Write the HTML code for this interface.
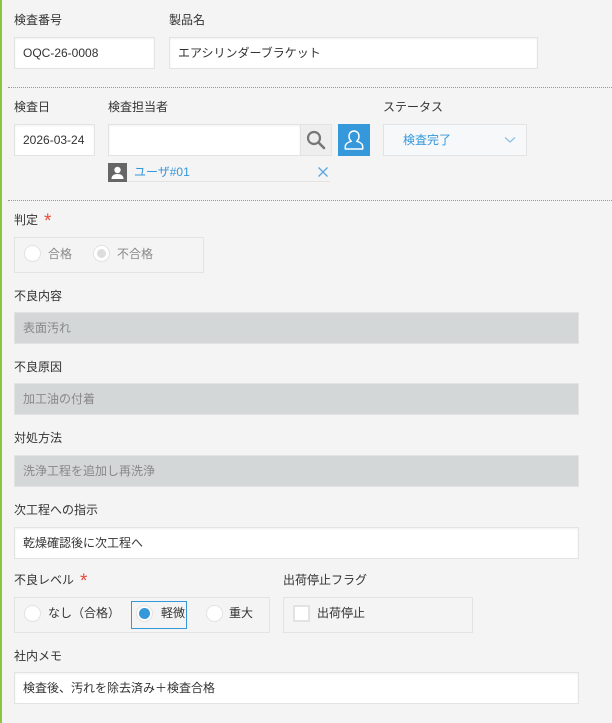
<!DOCTYPE html>
<html><head><meta charset="utf-8"><style>
*{box-sizing:border-box;margin:0;padding:0}
body{width:612px;height:723px;background:#f4f4f4;position:relative;overflow:hidden;font-family:"Liberation Sans","Noto Sans CJK JP",sans-serif;font-size:12px;color:#333}
.a{position:absolute}
.lbl{position:absolute;font-size:12px;line-height:14px;color:#333}
.in{position:absolute;background:#fff;border:1px solid #e3e3e3;box-shadow:inset 0 1px 2px rgba(0,0,0,.06);font-size:12px;line-height:30px;padding-left:8px;color:#333}
.dis{position:absolute;background:#d4d7d7;border:1px solid #e3e3e3;font-size:12px;line-height:30px;padding-left:8px;color:#888}
.box{position:absolute;border:1px solid #e3e3e3}
.rad{position:absolute;width:17px;height:17px;border-radius:50%;background:#fff;border:1px solid #e3e3e3}
.dot{position:absolute;left:0;right:0;height:0;border-top:1px dotted #999}
.req{color:#e74c3c;font-size:19px;line-height:10px;margin-left:6px;position:relative;top:3px}
</style></head><body>
<div class="a" style="left:0;top:0;width:2px;height:723px;background:#8cc63f"></div>

<div class="lbl" style="left:14px;top:13px">検査番号</div>
<div class="in" style="left:14px;top:37px;width:141px;height:32px">OQC-26-0008</div>
<div class="lbl" style="left:169px;top:13px">製品名</div>
<div class="in" style="left:169px;top:37px;width:369px;height:32px">エアシリンダーブラケット</div>

<div class="dot" style="left:8px;top:87px"></div>

<div class="lbl" style="left:14px;top:100px">検査日</div>
<div class="in" style="left:14px;top:124px;width:81px;height:32px">2026-03-24</div>
<div class="lbl" style="left:108px;top:100px">検査担当者</div>
<div class="in" style="left:108px;top:124px;width:193px;height:32px"></div>
<div class="a" style="left:300px;top:124px;width:32px;height:32px;background:#eee;border:1px solid #e3e3e3">
<svg width="30" height="30" viewBox="0 0 30 30"><circle cx="13" cy="13" r="6" fill="none" stroke="#777" stroke-width="2.2"/><line x1="17.5" y1="17.5" x2="23" y2="23" stroke="#777" stroke-width="2.6" stroke-linecap="round"/></svg></div>
<div class="a" style="left:338px;top:124px;width:32px;height:32px;background:#3498db">
<svg width="32" height="32" viewBox="0 0 32 32"><path d="M16 7c-3 0-5 2.3-5 5.3 0 2.3 1 4 2.3 5-3.5.8-6 2.8-6 5.2V25h17.4v-2.5c0-2.4-2.5-4.4-6-5.2 1.3-1 2.3-2.7 2.3-5C21 9.3 19 7 16 7z" fill="none" stroke="#fff" stroke-width="1.5" stroke-linejoin="round"/></svg></div>
<div class="lbl" style="left:383px;top:100px">ステータス</div>
<div class="a" style="left:383px;top:124px;width:144px;height:32px;background:#f6f8fa;border:1px solid #e3e3e3;color:#3498db;line-height:30px;padding-left:19px">検査完了
<svg class="a" style="left:120px;top:11px" width="12" height="8" viewBox="0 0 12 8"><path d="M1 1.5l5 4.5 5-4.5" fill="none" stroke="#8fc1e6" stroke-width="1.3"/></svg></div>

<div class="a" style="left:108px;top:163px;width:19px;height:19px;background:#666">
<svg width="19" height="19" viewBox="0 0 19 19"><circle cx="9.5" cy="7" r="3.2" fill="#fff"/><path d="M3.5 16c0-3.5 2.5-5 6-5s6 1.5 6 5z" fill="#fff"/></svg></div>
<div class="a" style="left:127px;top:181px;width:203px;height:1px;background:#e3e3e3"></div>
<div class="a" style="left:134px;top:165px;color:#3498db;font-size:12px;line-height:14px">ユーザ#01</div>
<svg class="a" style="left:318px;top:167px" width="10" height="10" viewBox="0 0 10 10"><path d="M0.5 0.5l9 9M9.5 0.5l-9 9" stroke="#5aa9e0" stroke-width="1.3"/></svg>

<div class="dot" style="left:8px;top:200px"></div>

<div class="lbl" style="left:14px;top:213px">判定<span class="req">*</span></div>
<div class="box" style="left:14px;top:237px;width:190px;height:36px"></div>
<div class="rad" style="left:24px;top:245px"></div>
<div class="lbl" style="left:48px;top:247px;color:#888">合格</div>
<div class="rad" style="left:93px;top:245px"></div>
<div class="a" style="left:97px;top:249px;width:9px;height:9px;border-radius:50%;background:#ddd"></div>
<div class="lbl" style="left:117px;top:247px;color:#888">不合格</div>

<div class="lbl" style="left:14px;top:289px">不良内容</div>
<div class="dis" style="left:14px;top:312px;width:565px;height:32px">表面汚れ</div>
<div class="lbl" style="left:14px;top:360px">不良原因</div>
<div class="dis" style="left:14px;top:383px;width:565px;height:32px">加工油の付着</div>
<div class="lbl" style="left:14px;top:431px">対処方法</div>
<div class="dis" style="left:14px;top:455px;width:565px;height:32px">洗浄工程を追加し再洗浄</div>
<div class="lbl" style="left:14px;top:503px">次工程への指示</div>
<div class="in" style="left:14px;top:527px;width:565px;height:32px">乾燥確認後に次工程へ</div>

<div class="lbl" style="left:14px;top:573px">不良レベル<span class="req">*</span></div>
<div class="box" style="left:14px;top:597px;width:256px;height:36px"></div>
<div class="rad" style="left:24px;top:605px"></div>
<div class="lbl" style="left:48px;top:606px">なし（合格）</div>
<div class="a" style="left:131px;top:601px;width:56px;height:28px;border:1px solid #3498db"></div>
<div class="rad" style="left:136px;top:605px"></div>
<div class="a" style="left:139px;top:608px;width:11px;height:11px;border-radius:50%;background:#3498db"></div>
<div class="lbl" style="left:161px;top:606px">軽微</div>
<div class="rad" style="left:206px;top:605px"></div>
<div class="lbl" style="left:229px;top:606px">重大</div>

<div class="lbl" style="left:283px;top:573px">出荷停止フラグ</div>
<div class="box" style="left:283px;top:597px;width:190px;height:36px"></div>
<div class="a" style="left:293px;top:605px;width:17px;height:17px;background:#fff;border:2px solid #e3e3e3"></div>
<div class="lbl" style="left:317px;top:606px">出荷停止</div>

<div class="lbl" style="left:14px;top:649px">社内メモ</div>
<div class="in" style="left:14px;top:672px;width:565px;height:32px">検査後、汚れを除去済み＋検査合格</div>
</body></html>
